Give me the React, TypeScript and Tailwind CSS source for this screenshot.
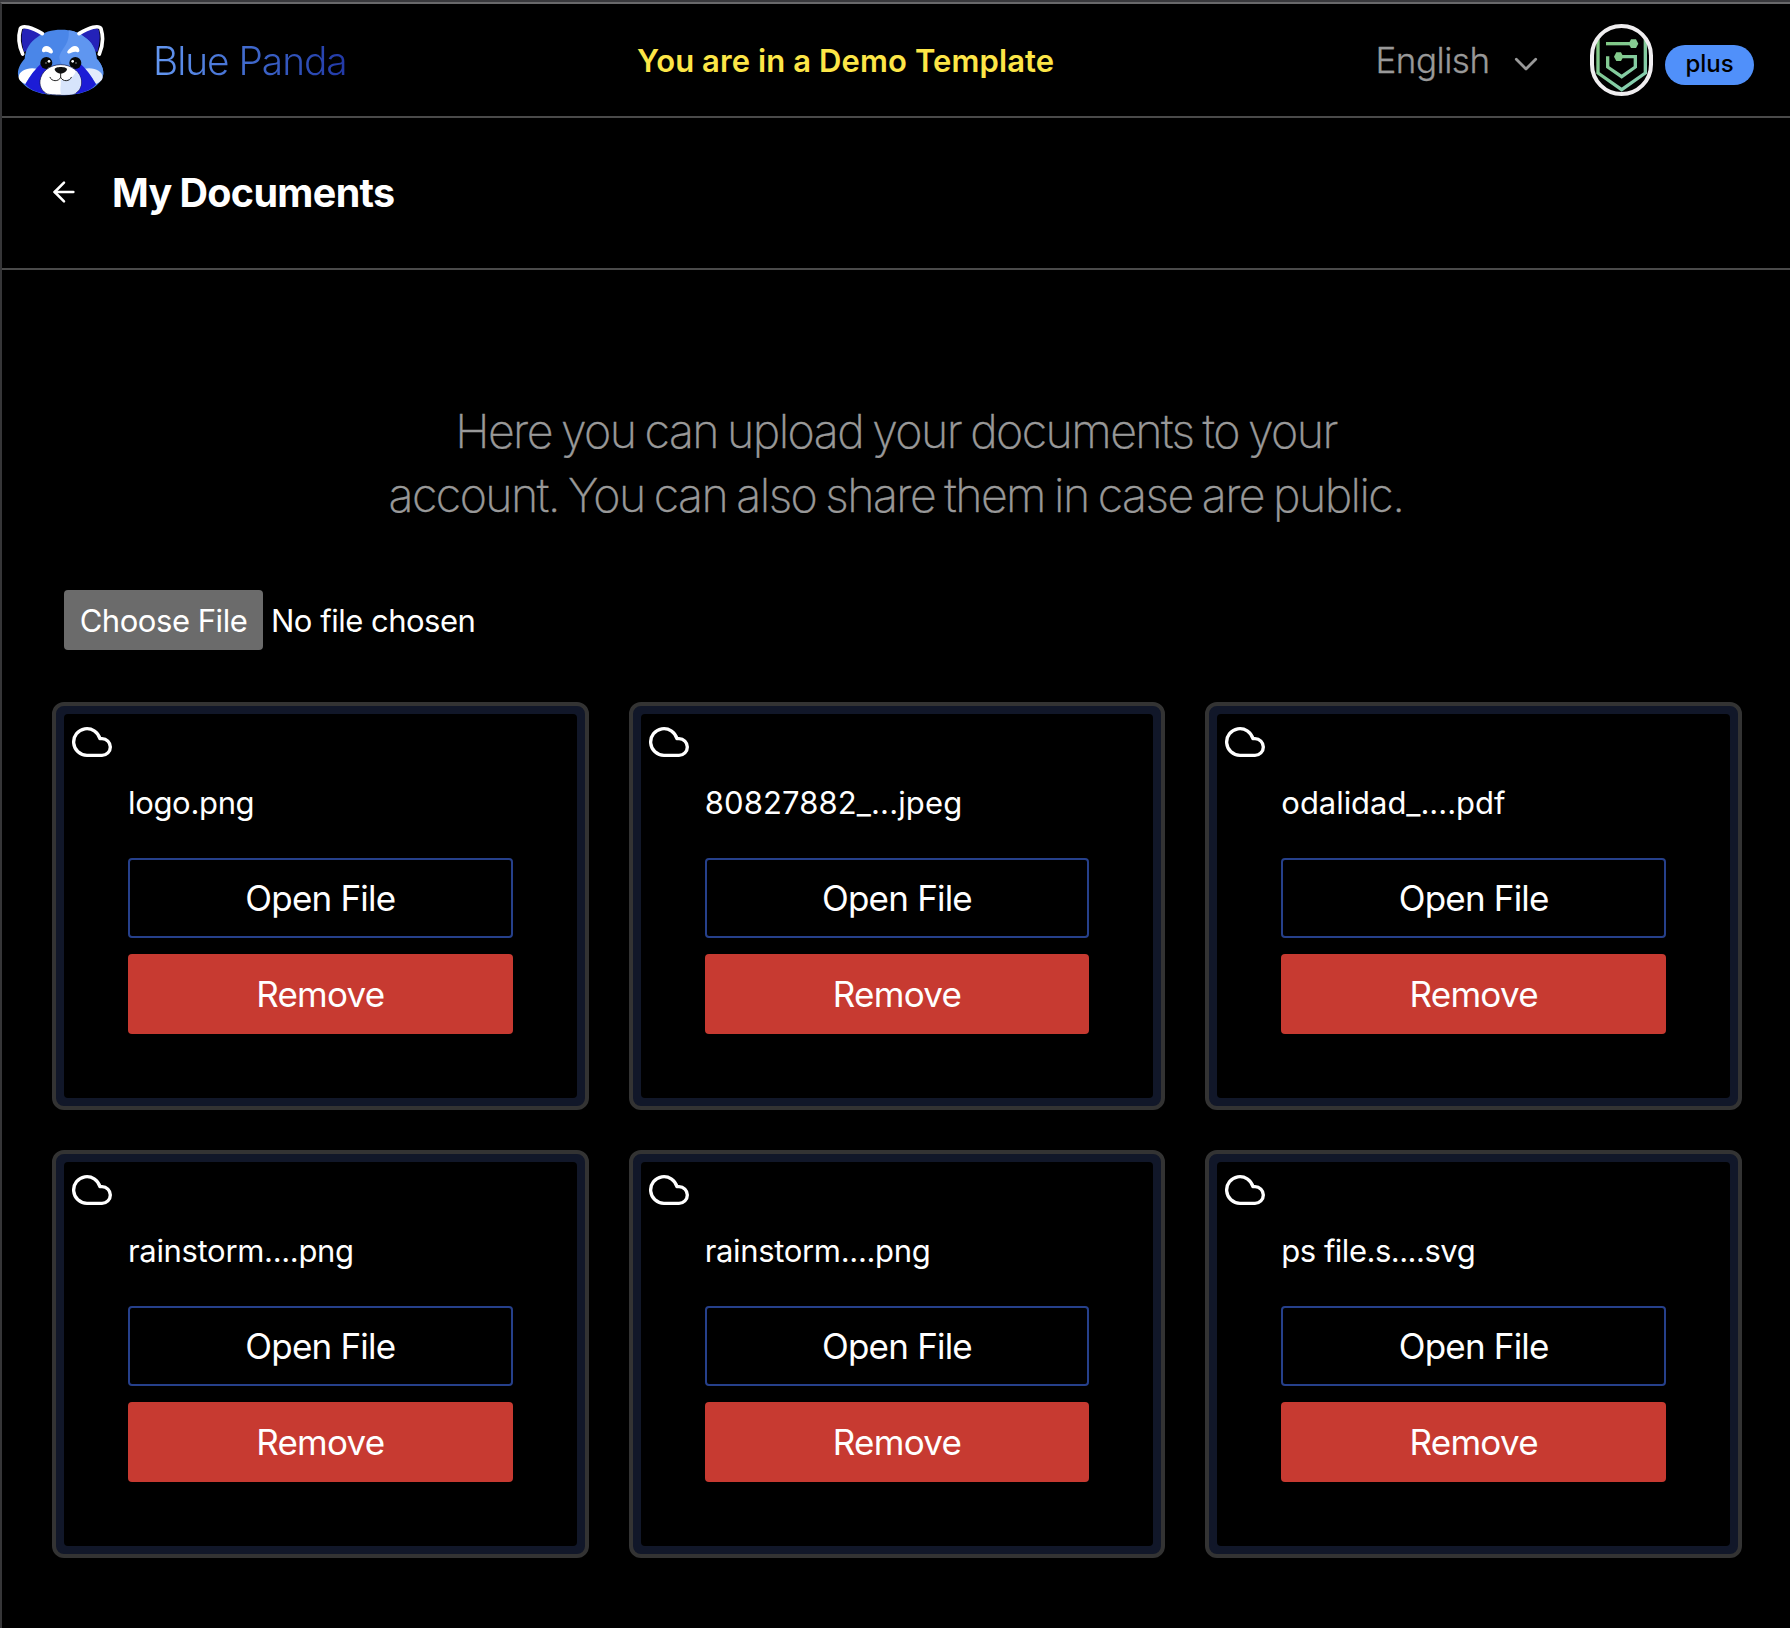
import { ArrowLeft } from "lucide-react";

type Doc = { name: string; tracking: string };

const documents: Doc[] = [
  { name: "logo.png", tracking: "tracking-[-0.33px]" },
  { name: "80827882_...jpeg", tracking: "tracking-[0.12px]" },
  { name: "odalidad_....pdf", tracking: "tracking-[-0.04px]" },
  { name: "rainstorm....png", tracking: "tracking-[-0.33px]" },
  { name: "rainstorm....png", tracking: "tracking-[-0.33px]" },
  { name: "ps file.s....svg", tracking: "tracking-[-0.5px]" },
];

function PandaLogo() {
  return (
    <svg className="h-28 w-[104px] shrink-0" viewBox="6 12 312 336" fill="none">
      <path d="M72 156C64 130 62 98 70 86C84 82 106 90 126 102L90 150Z" fill="#2422b8" />
      <path d="M292 156C300 130 302 98 294 86C280 82 258 90 238 102L274 150Z" fill="#2422b8" />
      <path
        d="M74 176C76 148 92 124 112 112C130 96 155 89 184 89C212 89 236 96 254 112C274 124 288 148 290 176C302 188 314 208 309 228C296 266 250 286 182 286C114 286 68 266 55 228C50 208 62 190 74 176Z"
        fill="#4a86e8"
      />
      <path
        d="M206 91C224 93 240 100 254 112C274 124 288 148 290 176C302 188 314 208 309 228L226 230C200 210 180 196 178 172C182 146 210 136 206 91Z"
        fill="#5f96f0"
      />
      <path d="M68 162C55 134 55 106 61 86C68 74 96 82 127 101" stroke="#fff" strokeWidth="11" strokeLinecap="round" />
      <path d="M298 162C310 134 309 106 303 86C296 74 268 82 237 101" stroke="#fff" strokeWidth="11" strokeLinecap="round" />
      <path d="M56 230C58 212 82 200 112 206C96 216 86 236 76 252C63 246 55 238 56 230Z" fill="#fff" />
      <path d="M308 230C306 212 282 200 252 206C268 216 278 236 288 252C301 246 309 238 308 230Z" fill="#e3ebfb" />
      <path d="M124 190C104 208 90 230 76 253C88 268 110 278 136 282L144 210Z" fill="#1c1cd6" />
      <path d="M240 190C260 208 274 230 288 253C276 268 254 278 228 282L220 210Z" fill="#1c1cd6" />
      <circle cx="139" cy="189" r="18" fill="#050505" />
      <circle cx="226" cy="189" r="18" fill="#050505" />
      <path
        d="M182 194C214 194 240 214 244 242C246 262 235 276 222 282C208 286 156 286 142 282C129 276 118 262 120 242C124 214 150 194 182 194Z"
        fill="#fff"
        stroke="#101040"
        strokeWidth="2"
      />
      <path d="M182 240C184 254 178 270 184 284C205 284 216 284 222 281C234 276 245 262 243 240C241 228 236 219 228 212C222 232 204 242 182 240Z" fill="#d7e4fb" />
      <circle cx="147" cy="184" r="4" fill="#fff" />
      <circle cx="218" cy="184" r="4" fill="#fff" />
      <circle cx="138" cy="189" r="2.5" fill="#9a9a9a" />
      <circle cx="228" cy="189" r="2.5" fill="#9a9a9a" />
      <path d="M126 150C128 138 140 134 150 142C156 147 163 156 156 160C150 163 144 153 134 156C128 158 125 155 126 150Z" fill="#fff" />
      <path d="M238 150C236 138 224 134 214 142C208 147 197 156 204 160C210 163 220 153 230 156C236 158 239 155 238 150Z" fill="#fff" />
      <path d="M164 208C165 199 200 199 201 208C201 214 190 221 182 221C174 221 164 214 164 208Z" fill="#111" />
      <path d="M182 220V232M150 232C154 245 176 246 182 232C188 246 210 245 214 232" stroke="#222" strokeWidth="3" strokeLinecap="round" />
    </svg>
  );
}

function Avatar() {
  return (
    <svg className="ml-[51px] h-[72px] w-[63px] shrink-0" viewBox="30 27 189 216" fill="none">
      <defs>
        <linearGradient id="shield" x1="60" y1="70" x2="190" y2="230" gradientUnits="userSpaceOnUse">
          <stop stopColor="#80c77e" />
          <stop offset="1" stopColor="#86d0b8" />
        </linearGradient>
      </defs>
      <g stroke="url(#shield)" strokeWidth="10">
        <path d="M54 72V174L125 224L196 174V72" />
        <path d="M78 86H155" />
        <path d="M83 124V156L125 185L166 156V125H116" />
      </g>
      <path d="M153 73H168L175 86L168 99H153L146 86Z" fill="#86cd92" />
      <path d="M109 112H123L130 125L123 138H109L102 125Z" fill="#84cb8c" />
      <rect x="36" y="33" width="177" height="204" rx="88.5" stroke="#f0eef0" strokeWidth="12" />
    </svg>
  );
}

function CloudIcon() {
  return (
    <svg className="size-10" viewBox="0 0 24 24" fill="none" stroke="#fff" strokeWidth="2" strokeLinecap="round" strokeLinejoin="round">
      <path d="M18 10h-1.26A8 8 0 1 0 9 20h9a5 5 0 0 0 0-10z" />
    </svg>
  );
}

function Header() {
  return (
    <header className="flex h-[114px] items-center border-b-2 border-[#4a4a4a]">
      <div className="flex w-[635px] shrink-0 items-center">
        <PandaLogo />
        <span className="ml-[47px] bg-linear-to-r from-[#6498f2] to-[#2238a6] bg-clip-text pt-px text-[38.8px] leading-[56px] font-light tracking-[-1px] whitespace-nowrap text-transparent">
          Blue Panda
        </span>
      </div>
      <p className="w-[738.5px] shrink-0 pt-0.5 text-[31px] leading-[56px] font-semibold tracking-[0.1px] text-[#fde647]">
        You are in a Demo Template
      </p>
      <div className="flex items-center">
        <span className="text-[35px] leading-[56px] font-light tracking-[-0.5px] text-[#999999] [-webkit-text-stroke:0.3px_#999999]">English</span>
        <svg className="mt-2 ml-[23.5px] h-4 w-[26px]" viewBox="0 0 26 16" fill="none">
          <path d="M3.3 3.3L13 13L22.7 3.3" stroke="#999999" strokeWidth="2.8" strokeLinecap="round" strokeLinejoin="round" />
        </svg>
        <Avatar />
        <span className="mt-2.5 ml-3 flex h-10 w-[89px] justify-center rounded-full bg-[#5090fa] text-2xl leading-[38px] font-medium text-black">
          plus
        </span>
      </div>
    </header>
  );
}

function DocumentCard({ doc }: { doc: Doc }) {
  return (
    <article className="rounded-xl border-4 border-[#333333] bg-[#111729] p-2">
      <div className="h-96 rounded bg-black pt-2">
        <div className="pl-2">
          <CloudIcon />
        </div>
        <div className="mt-4 flex flex-col px-16">
          <p className={`h-20 text-[31px] leading-[50px] whitespace-nowrap ${doc.tracking}`}>{doc.name}</p>
          <button className="h-20 rounded border-2 border-[#26408b] text-[35px] tracking-[-0.8px]">Open File</button>
          <button className="mt-4 h-20 rounded bg-[#c73a31] text-[35px] tracking-[-0.75px]">Remove</button>
        </div>
      </div>
    </article>
  );
}

export default function App() {
  return (
    <div className="h-[1628px] w-[1790px] overflow-hidden border-t-2 border-[#38383c] bg-black font-['Inter',sans-serif] text-white">
      <div className="h-full border-t-2 border-l-2 border-t-[#68686a] border-l-[#363638]">
        <Header />
        <div className="flex h-[152px] items-center border-b-2 border-[#4a4a4a] pl-[46px]">
          <ArrowLeft className="-mt-0.5 size-8" strokeWidth={1.9} />
          <h1 className="ml-8 pt-0.5 text-[39.5px] font-bold tracking-[-0.65px] [word-spacing:-1px]">My Documents</h1>
        </div>
        <main className="pr-12 pl-[50px]">
          <p className="pt-[129px] pr-0.5 text-center text-[46.5px] leading-[64px] font-extralight tracking-[-1.57px] text-[#999999] [-webkit-text-stroke:0.4px_#999999] [word-spacing:-2.4px]">
            Here you can upload your documents to your
            <br />
            account. You can also share them in case are public.
          </p>
          <div className="mt-[63px] flex h-[60px] items-center pl-3 text-[31px]">
            <button className="h-[60px] w-[199px] rounded bg-[#6b6b6b] pt-0.5 tracking-[-0.46px]">Choose File</button>
            <span className="ml-2 pt-0.5 tracking-[-0.5px]">No file chosen</span>
          </div>
          <section className="mt-[52px] grid grid-cols-3 gap-10">
            {documents.map((doc, i) => (
              <DocumentCard key={i} doc={doc} />
            ))}
          </section>
        </main>
      </div>
    </div>
  );
}
